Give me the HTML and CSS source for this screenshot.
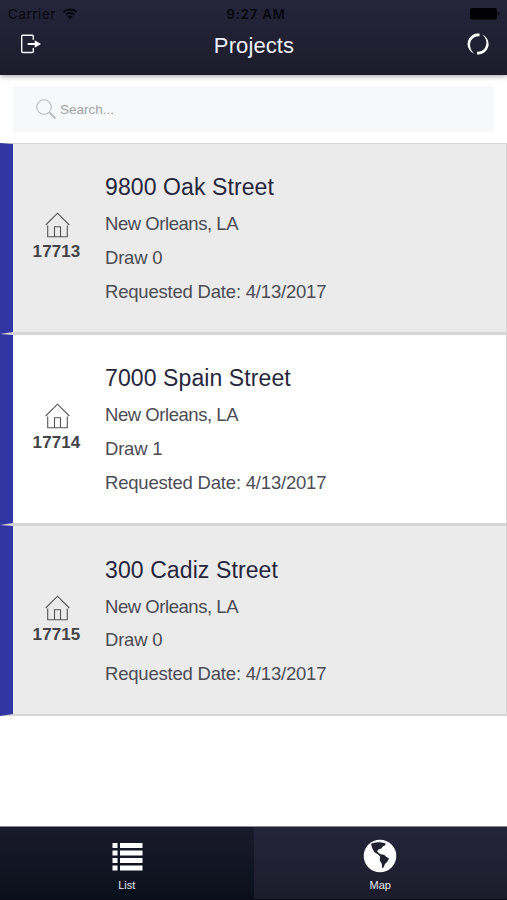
FILE: index.html
```html
<!DOCTYPE html>
<html lang="en">
<head>
<meta charset="utf-8">
<title>Projects</title>
<link rel="stylesheet" href="styles.css">
</head>
<body>
<div class="app">
  <header class="header">
    <div class="status">
      <div class="carrier">Carrier
        <svg width="16" height="12" viewBox="0 0 16 12" fill="none" stroke="#06060d" stroke-width="1.9"><path d="M1.5 4.2a9.3 9.3 0 0 1 13 0M4 6.7a5.7 5.7 0 0 1 8 0"/><path d="M8 11.3L5.4 8.6a3.8 3.8 0 0 1 5.2 0z" fill="#06060d" stroke="none"/></svg>
      </div>
      <div class="time">9:27 AM</div>
      <svg class="battery" width="30" height="12" viewBox="0 0 30 12"><rect width="27" height="11.5" rx="2"/><path d="M27.8 3.800q1.700.6 1.700 2t-1.700 2z"/></svg>
    </div>
    <div class="nav">
      <svg width="22" height="20" viewBox="0 0 22 20"><path d="M13.300 5.800V2.200q0-1-1-1H2.700q-1 0-1 1v15.300q0 1 1 1h9.600q1 0 1-1v-3.600" fill="none" stroke="#f4f5fa" stroke-width="1.400"/><path d="M7.700 9h7V6.300l6.300 3.700-6.300 3.700V11h-7z" fill="#fff"/></svg>
      <h1>Projects</h1>
      <svg width="22" height="22" viewBox="0 0 22 22"><path d="M12.500.6A10.400 10.400 0 0 0 2.300 16.500Q4.300 20 7.800 21Q4 18 3.200 13.500Q2.300 7.500 7 4.400Q9.500 3 12.500 3.200z" fill="#fff"/><path d="M14.500 1.200A10.400 10.400 0 0 1 10 21.400V18.800Q15.500 18.900 18.200 14.500Q21 9 17.500 4Q16.500 2.500 14.500 1.200z" fill="#fff"/></svg>
    </div>
  </header>

  <main class="content">
    <div class="search">
      <svg width="21" height="21" viewBox="0 0 21 21" fill="none" stroke="#b9bbbf"><circle cx="8" cy="8" r="7.300" stroke-width="1.100"/><path d="M13.200 13.200l6.300 6.300" stroke-width="1.900"/></svg>
      <span>Search...</span>
    </div>

    <div class="cards">
      <article class="card shaded">
        <div class="id"><svg class="house" viewBox="0 0 25 26"><path d="M.7 13L12.500 1.200 24.300 13M2.700 13.500V24.800H22.300V13.500M9.500 24.800V14.800H15.500V24.800"/></svg><b>17713</b></div>
        <div class="info"><h2>9800 Oak Street</h2><p class="city">New Orleans, LA</p><p>Draw 0</p><p>Requested Date: 4/13/2017</p></div>
      </article>
      <article class="card">
        <div class="id"><svg class="house" viewBox="0 0 25 26"><path d="M.7 13L12.500 1.200 24.300 13M2.700 13.500V24.800H22.300V13.500M9.500 24.800V14.800H15.500V24.800"/></svg><b>17714</b></div>
        <div class="info"><h2>7000 Spain Street</h2><p class="city">New Orleans, LA</p><p>Draw 1</p><p>Requested Date: 4/13/2017</p></div>
      </article>
      <article class="card shaded">
        <div class="id"><svg class="house" viewBox="0 0 25 26"><path d="M.7 13L12.500 1.200 24.300 13M2.700 13.500V24.800H22.300V13.500M9.500 24.800V14.800H15.500V24.800"/></svg><b>17715</b></div>
        <div class="info"><h2>300 Cadiz Street</h2><p class="city">New Orleans, LA</p><p>Draw 0</p><p>Requested Date: 4/13/2017</p></div>
      </article>
    </div>
  </main>

  <nav class="tabs">
    <div class="tab active">
      <svg width="34" height="34" viewBox="0 0 34 34" fill="#fff"><path d="M2.500 4h5v5h-5zM10 4h22.500v5H10zM2.500 11.500h5v5h-5zM10 11.500h22.500v5H10zM2.500 19h5v5h-5zM10 19h22.500v5H10zM2.500 26.500h5v5h-5zM10 26.500h22.500v5H10z"/></svg>
      <span>List</span>
    </div>
    <div class="tab">
      <svg width="34" height="34" viewBox="0 0 34 34"><circle cx="17" cy="17" r="16.300" fill="#fff"/><path d="M8 4.800Q12 2.700 17 3.300L22.500 4.300 22.300 6.200 20 7.300 18.300 9.500 15.800 10.200 14 12.200 15.200 13.500 17.500 15.300 21 15.700 23.200 17.800 26 19.500 24.500 22.500 22 25 20.500 28.500 19.200 29.300 18.700 24.500 16.800 21.500 17 17.500 15.500 15.800 11.500 13.200 9.800 10.500 8.700 7.500z" fill="#20202f"/></svg>
      <span>Map</span>
    </div>
  </nav>
</div>
</body>
</html>
```
FILE: styles.css
```css
* { box-sizing: border-box; }
body { margin: 0; background: #fff; font-family: "Liberation Sans", Arial, sans-serif; }
h1, h2, p { margin: 0; font-weight: 400; }
svg { display: block; flex: none; }
.app { height: 900px; display: flex; flex-direction: column; overflow: hidden; }
.header { height: 75px; flex: none; background: linear-gradient(#25253a, #1b1c2a); box-shadow: 0 1px 5px rgba(30, 30, 50, .45); }
.status { height: 27px; padding: 0 7px 0 8px; display: grid; grid-template-columns: 1fr auto 1fr; align-items: center; color: #06060d; font: 13.5px/28px Inter, sans-serif; }
.carrier { display: flex; align-items: center; gap: 6px; letter-spacing: .5px; }
.time { font-weight: 600; font-size: 13px; letter-spacing: .9px; padding-left: 4px; }
.battery { justify-self: end; fill: #020205; }
.nav { height: 36px; padding: 0 18px 0 20px; display: flex; align-items: center; justify-content: space-between; }
.nav svg { margin-bottom: 2px; }
.nav h1 { font-size: 22px; line-height: 36px; letter-spacing: .1px; color: #edf0fa; padding-top: 2px; padding-right: 1px; }
.content { flex: 1; }
.search { height: 46px; margin: 11px 13px 10px; padding: 1px 0 0 23px; display: flex; align-items: center; gap: 3px; border-radius: 3px; background: #f6f8fa; color: #a1a3a6; font-size: 13.5px; }
.card { height: 191.3px; display: flex; border: solid #d5d5d5; border-width: 1px 1px 2px 13px; border-left-color: #3036a4; background: #fff; }
.cards { padding-top: .5px; }
.shaded { background: #ebebeb; }
.id { width: 92px; padding: 68.5px 4px 0 0; display: flex; flex-direction: column; align-items: center; }
.house { width: 25px; height: 26px; fill: none; stroke: #555558; stroke-width: 1.1; }
.id b { margin: 4px 1px 0 0; font-size: 17px; line-height: 20px; letter-spacing: .1px; color: #444448; }
.info { padding-top: 25.5px; color: #4c4c55; font-size: 18.5px; }
.info h2 { font-size: 23px; line-height: 36px; letter-spacing: .1px; color: #26263d; }
.info p { line-height: 33.8px; letter-spacing: -.2px; }
.info .city { padding-top: 2.1px; letter-spacing: -.45px; }
.tabs { height: 74px; flex: none; display: flex; border-top: 1px solid #888991; border-bottom: 1px solid #0b0c16; background: linear-gradient(#25253a, #1b1c2a); }
.tab { flex: 1; padding-top: 12px; display: flex; flex-direction: column; align-items: center; color: #e7e9f1; font-size: 11px; line-height: 13px; gap: 6px; }
.active { background: linear-gradient(#191a2b, #09101b); }
```
